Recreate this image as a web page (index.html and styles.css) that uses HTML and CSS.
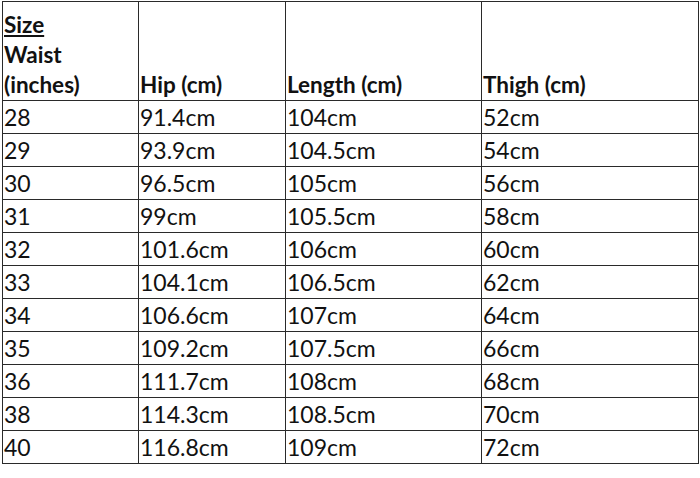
FILE: index.html
```html
<!DOCTYPE html>
<html>
<head>
<meta charset="utf-8">
<link rel="stylesheet" href="styles.css">
</head>
<body>
<table class="size-table">
  <colgroup>
    <col class="c1"><col class="c2"><col class="c3"><col class="c4">
  </colgroup>
  <thead>
    <tr class="head">
      <th><span class="u">Size</span><br>Waist<br>(inches)</th>
      <th>Hip (cm)</th>
      <th>Length (cm)</th>
      <th>Thigh (cm)</th>
    </tr>
  </thead>
  <tbody>
    <tr><td>28</td><td>91.4cm</td><td>104cm</td><td>52cm</td></tr>
    <tr><td>29</td><td>93.9cm</td><td>104.5cm</td><td>54cm</td></tr>
    <tr><td>30</td><td>96.5cm</td><td>105cm</td><td>56cm</td></tr>
    <tr><td>31</td><td>99cm</td><td>105.5cm</td><td>58cm</td></tr>
    <tr><td>32</td><td>101.6cm</td><td>106cm</td><td>60cm</td></tr>
    <tr><td>33</td><td>104.1cm</td><td>106.5cm</td><td>62cm</td></tr>
    <tr><td>34</td><td>106.6cm</td><td>107cm</td><td>64cm</td></tr>
    <tr><td>35</td><td>109.2cm</td><td>107.5cm</td><td>66cm</td></tr>
    <tr><td>36</td><td>111.7cm</td><td>108cm</td><td>68cm</td></tr>
    <tr><td>38</td><td>114.3cm</td><td>108.5cm</td><td>70cm</td></tr>
    <tr><td>40</td><td>116.8cm</td><td>109cm</td><td>72cm</td></tr>
  </tbody>
</table>
</body>
</html>
```
FILE: styles.css
```css
html, body {
  margin: 0;
  padding: 0;
  background: #fff;
}
body {
  padding: 1px 0 0 2px;
  font-family: Lato, "Liberation Sans", sans-serif;
  color: #111;
}
.size-table {
  border-collapse: collapse;
  table-layout: fixed;
  width: 696px;
}
.c1 { width: 136px; }
.c2 { width: 147px; }
.c3 { width: 196px; }
.c4 { width: 217px; }
.size-table th,
.size-table td {
  border: 1px solid #2a2a2a;
  padding: 0 0 0 1px;
  text-align: left;
  white-space: nowrap;
  overflow: hidden;
}
.size-table th {
  font-weight: bold;
  font-size: 22.5px;
  line-height: 30px;
  height: 98px;
  vertical-align: bottom;
  padding-bottom: 0;
}
.size-table td {
  font-size: 23px;
  height: 32px;
  line-height: 32px;
  vertical-align: middle;
}
.u {
  text-decoration: underline;
  text-underline-offset: 2px;
}
```
